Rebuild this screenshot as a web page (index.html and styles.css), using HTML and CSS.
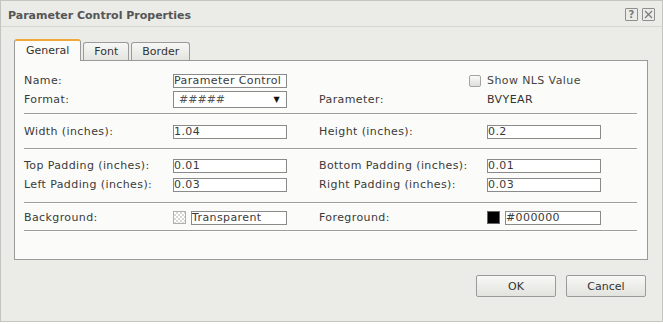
FILE: index.html
```html
<!DOCTYPE html>
<html>
<head>
    <title>Parameter Control Properties</title>
    <link rel="stylesheet" href="styles.css">
</head>
<body>
    <div class="dialog">
        <div class="titlebar">
            <span class="title">Parameter Control Properties</span>
            <div class="title-tools">
                <span class="tool tool-help">?</span>
                <span class="tool">
                    <svg width="9" height="9" viewBox="0 0 9 9">
                        <path d="M1 1 L8 8 M8 1 L1 8" stroke="#7a7a7a" stroke-width="1.2" fill="none"/>
                    </svg>
                </span>
            </div>
        </div>

        <div class="dialog-body">
            <div class="tabs">
                <div class="tab tab-active">General</div>
                <div class="tab">Font</div>
                <div class="tab">Border</div>
            </div>

            <div class="panel">
                <div class="section section-first">
                    <div class="row">
                        <span class="label">Name:</span>
                        <span class="field">Parameter Control</span>
                        <span></span>
                        <label class="check"><span class="checkbox"></span>Show NLS Value</label>
                    </div>
                    <div class="row">
                        <span class="label">Format:</span>
                        <span class="select"><span class="select-value">#####</span><span class="select-arrow">&#9660;</span></span>
                        <span class="label">Parameter:</span>
                        <span class="value">BVYEAR</span>
                    </div>
                </div>

                <div class="section section-size">
                    <div class="row">
                        <span class="label">Width (inches):</span>
                        <span class="field">1.04</span>
                        <span class="label">Height (inches):</span>
                        <span class="field">0.2</span>
                    </div>
                </div>

                <div class="section section-padding">
                    <div class="row">
                        <span class="label">Top Padding (inches):</span>
                        <span class="field">0.01</span>
                        <span class="label">Bottom Padding (inches):</span>
                        <span class="field">0.01</span>
                    </div>
                    <div class="row">
                        <span class="label">Left Padding (inches):</span>
                        <span class="field">0.03</span>
                        <span class="label">Right Padding (inches):</span>
                        <span class="field">0.03</span>
                    </div>
                </div>

                <div class="section section-color">
                    <div class="row">
                        <span class="label">Background:</span>
                        <span class="color-pick"><span class="swatch swatch-transparent"></span><span class="field field-short">Transparent</span></span>
                        <span class="label">Foreground:</span>
                        <span class="color-pick"><span class="swatch swatch-black"></span><span class="field field-short">#000000</span></span>
                    </div>
                </div>
            </div>
        </div>

        <div class="footer">
            <button class="button">OK</button>
            <button class="button">Cancel</button>
        </div>
    </div>
</body>
</html>
```

FILE: styles.css
```css
body {
    margin: 0;
    font-family: "DejaVu Sans", Verdana, sans-serif;
    font-size: 11px;
    color: #3a3a3a;
    background-color: #fff;
}
.dialog {
    width: 663px;
    height: 322px;
    box-sizing: border-box;
    border: 1px solid #c4c4c0;
    background-color: #ebebe7;
}
.titlebar {
    height: 25px;
    border-bottom: 1px solid #d6d6d2;
    display: flex;
    align-items: center;
    justify-content: space-between;
    padding: 0 7px 0 7px;
}
.title {
    font-weight: bold;
    font-size: 11px;
    color: #555;
    margin-top: 3px;
}
.title-tools {
    display: flex;
    gap: 4px;
    margin-top: 2px;
}
.tool {
    width: 11px;
    height: 11px;
    border: 1px solid #8e8e8e;
    border-radius: 1px;
    display: flex;
    align-items: center;
    justify-content: center;
    font-size: 10px;
    font-weight: bold;
    color: #7a7a7a;
    line-height: 1;
}
.dialog-body {
    padding: 12px 13px 0 13px;
}
.tabs {
    display: flex;
    align-items: flex-end;
    gap: 2px;
    height: 21px;
    position: relative;
    z-index: 1;
}
.tab {
    height: 17px;
    line-height: 17px;
    padding: 0 10px;
    border: 1px solid #9a9a9a;
    border-bottom: none;
    border-radius: 3px 3px 0 0;
    background: linear-gradient(#f7f7f5, #e4e4e0);
    color: #333;
}
.tab-active {
    height: 20px;
    line-height: 19px;
    padding: 0 11px;
    border-top: 2px solid #f0a83a;
    background: #fbfcf9;
    margin-bottom: -1px;
}
.panel {
    width: 634px;
    height: 200px;
    box-sizing: border-box;
    border: 1px solid #9a9a9a;
    background-color: #fbfcf9;
    padding: 0 10px 0 9px;
    letter-spacing: 0.4px;
}
.section {
    border-bottom: 1px solid #9d9d9d;
    box-shadow: 0 1px 0 #ffffff;
}
.section-first {
    padding: 10px 0 4px 0;
}
.section-size {
    padding: 8px 0 7px 0;
}
.section-padding {
    padding: 7px 0 8px 0;
}
.section-color {
    padding: 5px 0 3px 0;
}
.row {
    display: grid;
    grid-template-columns: 149px 146px 168px 1fr;
    height: 19px;
    align-items: center;
}
.field {
    display: block;
    width: 114px;
    height: 14px;
    box-sizing: border-box;
    border: 1px solid #8a8a8a;
    background-color: #fff;
    padding: 0 1px 0 0;
    line-height: 12px;
    white-space: nowrap;
    overflow: hidden;
}
.field-short {
    width: 96px;
}
.select {
    display: flex;
    align-items: center;
    justify-content: space-between;
    width: 114px;
    height: 17px;
    box-sizing: border-box;
    border: 1px solid #8a8a8a;
    background-color: #fff;
    padding: 0 6px 0 5px;
}
.select-value {
    letter-spacing: 0;
    color: #555;
}
.select-arrow {
    font-size: 8px;
    color: #111;
}
.check {
    display: flex;
    align-items: center;
    gap: 6px;
    margin-left: -18px;
    color: #444;
}
.checkbox {
    width: 10px;
    height: 10px;
    border: 1px solid #a4a4a4;
    border-radius: 2px;
    background: linear-gradient(#fafafa, #dedede);
}
.value {
    color: #333;
}
.color-pick {
    display: flex;
    align-items: center;
    gap: 5px;
}
.swatch {
    width: 11px;
    height: 11px;
    border: 1px solid #b0b0b0;
}
.swatch-transparent {
    background-color: #fff;
    background-image:
        linear-gradient(45deg, #d8d8d8 25%, transparent 25%, transparent 75%, #d8d8d8 75%),
        linear-gradient(45deg, #d8d8d8 25%, transparent 25%, transparent 75%, #d8d8d8 75%);
    background-size: 4px 4px;
    background-position: 0 0, 2px 2px;
}
.swatch-black {
    background-color: #000;
    border-color: #666;
}
.footer {
    display: flex;
    justify-content: flex-end;
    gap: 10px;
    padding: 15px 16px 0 0;
}
.button {
    width: 80px;
    height: 22px;
    border: 1px solid #9a9a9a;
    border-radius: 2px;
    background: linear-gradient(#f8f8f6, #e2e2de);
    font-family: "DejaVu Sans", Verdana, sans-serif;
    font-size: 11px;
    color: #333;
    padding: 0;
}
```
